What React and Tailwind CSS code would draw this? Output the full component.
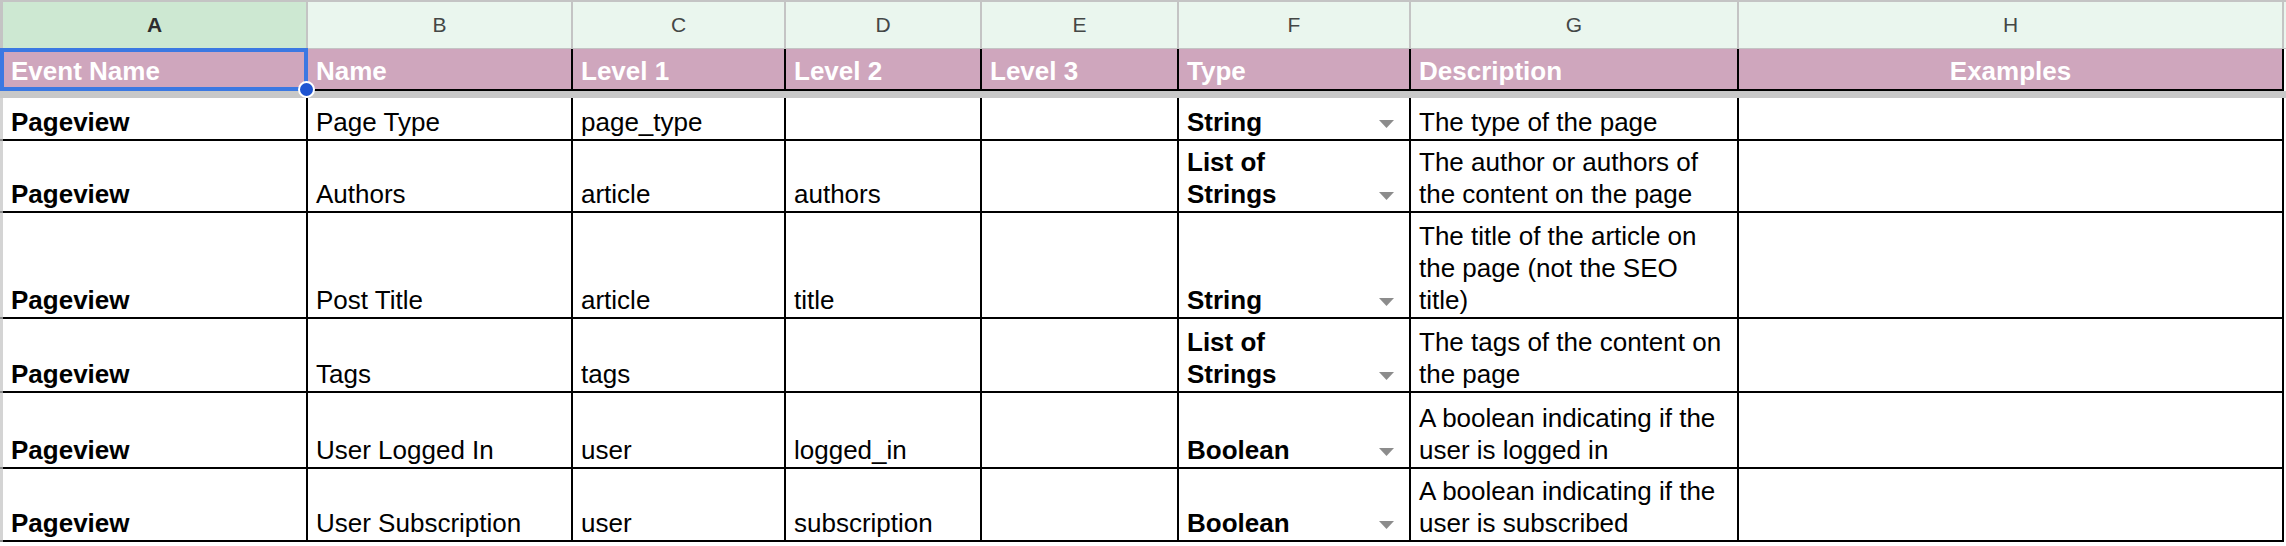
import React from "react";

const GRID =
  "grid grid-cols-[3px_305px_265px_213px_196px_197px_232px_328px_545px_2px]";

const letters = ["A", "B", "C", "D", "E", "F", "G", "H"];
const headers = [
  "Event Name",
  "Name",
  "Level 1",
  "Level 2",
  "Level 3",
  "Type",
  "Description",
  "Examples",
];

const rows = [
  {
    h: "h-[43px]",
    b: "Page Type",
    c: "page_type",
    d: "",
    f: ["String"],
    g: ["The type of the page"],
  },
  {
    h: "h-[72px]",
    b: "Authors",
    c: "article",
    d: "authors",
    f: ["List of", "Strings"],
    g: ["The author or authors of", "the content on the page"],
  },
  {
    h: "h-[106px]",
    b: "Post Title",
    c: "article",
    d: "title",
    f: ["String"],
    g: ["The title of the article on", "the page (not the SEO", "title)"],
  },
  {
    h: "h-[74px]",
    b: "Tags",
    c: "tags",
    d: "",
    f: ["List of", "Strings"],
    g: ["The tags of the content on", "the page"],
  },
  {
    h: "h-[76px]",
    b: "User Logged In",
    c: "user",
    d: "logged_in",
    f: ["Boolean"],
    g: ["A boolean indicating if the", "user is logged in"],
  },
  {
    h: "h-[73px]",
    b: "User Subscription",
    c: "user",
    d: "subscription",
    f: ["Boolean"],
    g: ["A boolean indicating if the", "user is subscribed"],
  },
];

function Cell({ children, className = "" }) {
  return (
    <div
      className={`flex items-end border-r-2 border-b-2 border-black px-[8px] pb-[1px] whitespace-nowrap overflow-hidden ${className}`}
    >
      {children}
    </div>
  );
}

// Google Sheets dropdown chip arrow
function Arrow() {
  return (
    <svg width="15" height="8" viewBox="0 0 15 8" className="mb-[10px] shrink-0">
      <path d="M0 0h15L7.5 8z" fill="#8c8c8c" />
    </svg>
  );
}

export default function App() {
  return (
    <div
      className="w-[2286px] h-[546px] bg-white overflow-hidden text-black"
      style={{ fontFamily: '"Liberation Sans", Arial, sans-serif' }}
    >
      {/* column letters */}
      <div className={`${GRID} h-[49px] border-t-2 border-[#c4c4c4]`}>
        <div className="bg-[#c4c4c4]" />
        {letters.map((l, i) => (
          <div
            key={l}
            className={`flex items-center justify-center border-r-2 border-b border-[#c4c4c4] text-[21px] ${
              i === 0
                ? "bg-[#cde8d2] text-[#2d2d2d] font-bold"
                : "bg-[#eaf6ee] text-[#444746]"
            }`}
          >
            {l}
          </div>
        ))}
        <div className="bg-[#eaf6ee] border-b border-[#c4c4c4]" />
      </div>

      {/* header row */}
      <div className={`${GRID} h-[42px]`}>
        <div className="bg-[#c4c4c4] border-b-2 border-[#8a8a8a]" />
        {headers.map((t, i) => (
          <div
            key={t}
            className={`relative flex items-end border-r-2 border-b-2 border-black bg-[#cfa6bd] px-[8px] pb-[2px] text-[26px] leading-[32px] font-bold text-white whitespace-nowrap ${
              i === 7 ? "justify-center" : ""
            }`}
          >
            {t}
            {i === 0 && (
              <>
                <div className="absolute -top-[1px] -left-[3px] -right-[2px] -bottom-[2px] border-[4px] border-[#3b78e2]" />
                <div className="absolute -right-[9px] -bottom-[9px] w-[17px] h-[17px] rounded-full bg-[#1f55d2] border-2 border-white z-10" />
              </>
            )}
          </div>
        ))}
        <div />
      </div>

      {/* frozen divider */}
      <div className="h-[7px] bg-[#c8c8c8]" />

      {/* data rows */}
      {rows.map((r, idx) => (
        <div key={idx} className={`${GRID} ${r.h} text-[26px] leading-[32px]`}>
          <div className="bg-[#d4d4d4] border-b-2 border-[#8a8a8a]" />
          <Cell className="font-bold">Pageview</Cell>
          <Cell>{r.b}</Cell>
          <Cell>{r.c}</Cell>
          <Cell>{r.d}</Cell>
          <Cell />
          <Cell className="justify-between font-bold pr-[15px]">
            <div>
              {r.f.map((line) => (
                <div key={line}>{line}</div>
              ))}
            </div>
            <Arrow />
          </Cell>
          <Cell>
            <div>
              {r.g.map((line) => (
                <div key={line}>{line}</div>
              ))}
            </div>
          </Cell>
          <Cell />
          <div />
        </div>
      ))}
    </div>
  );
}
